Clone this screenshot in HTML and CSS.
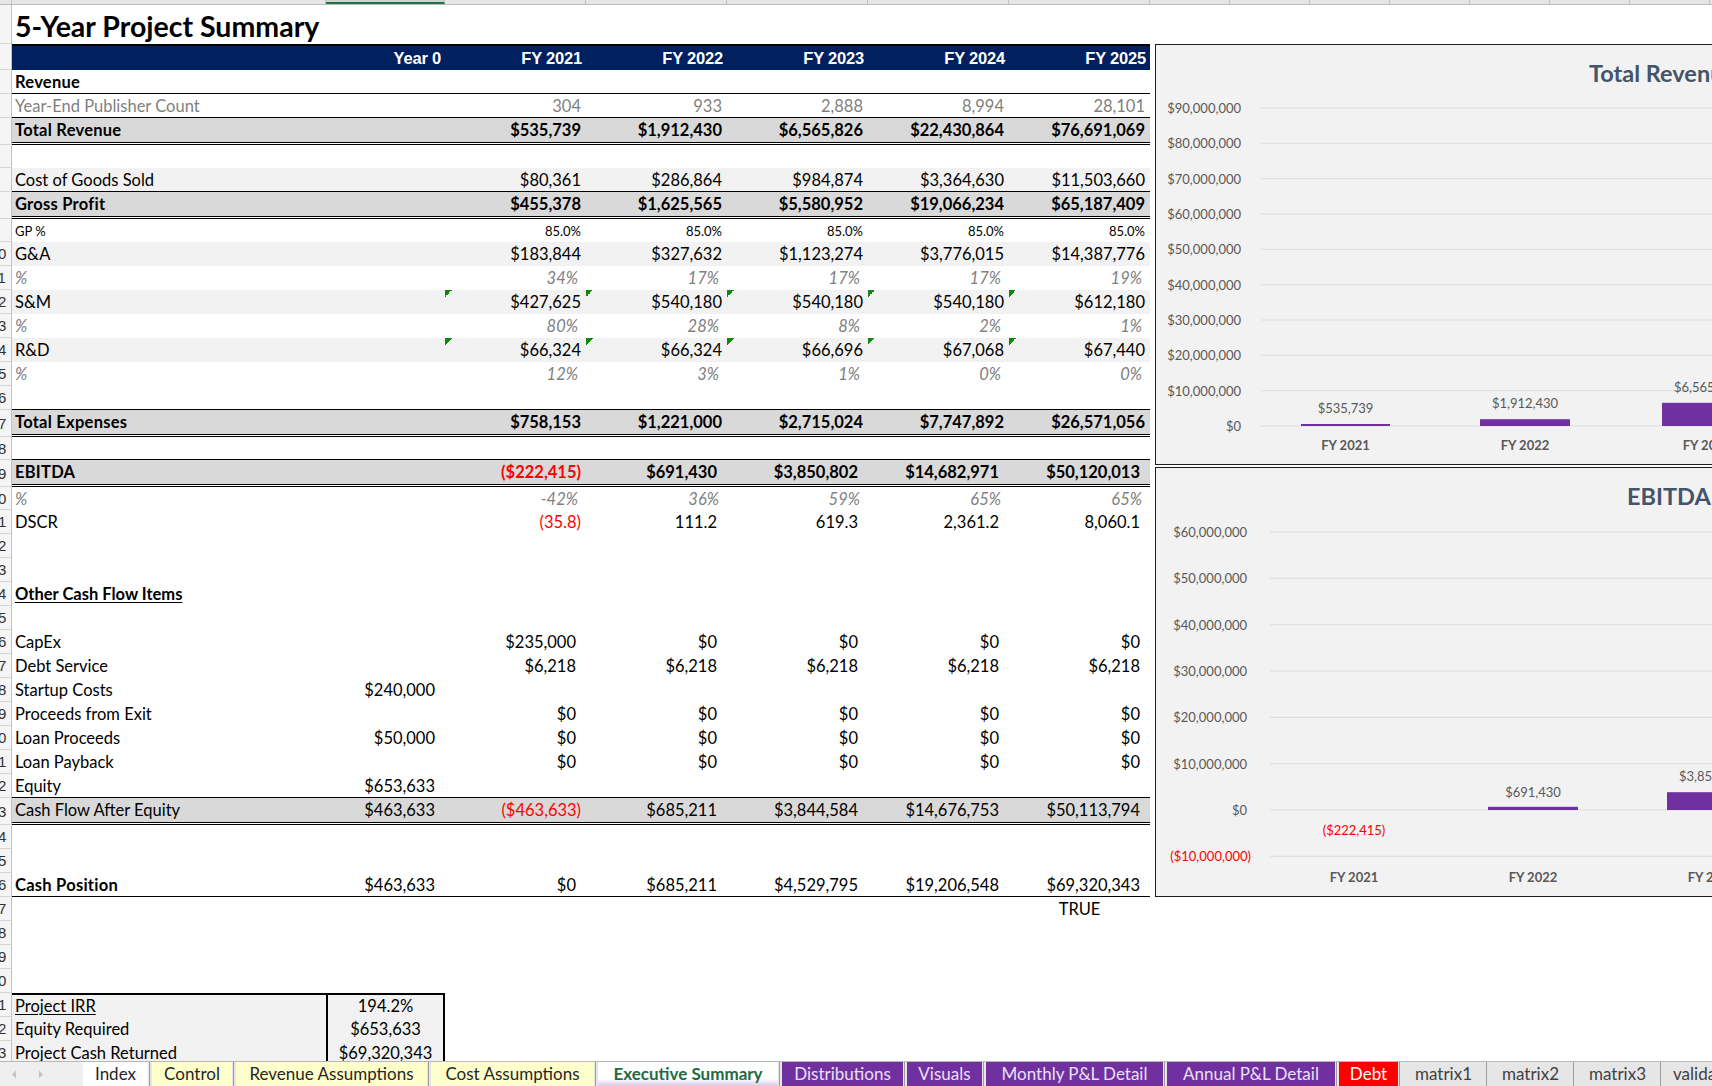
FILE: index.html
```html
<!DOCTYPE html>
<html>
<head>
<meta charset="utf-8">
<title>5-Year Project Summary</title>
<link rel="stylesheet" href="styles.css">
</head>
<body>
<div class="colheads">
  <div class="ch corner"></div>
  <div class="ch wa"></div>
  <div class="ch wb sel"></div>
  <div class="ch wc"></div><div class="ch wc"></div><div class="ch wc"></div><div class="ch wc"></div><div class="ch wc"></div>
  <div class="ch wh"></div><div class="ch wh"></div><div class="ch wh"></div><div class="ch wh"></div><div class="ch wh"></div><div class="ch wh"></div><div class="ch wh"></div>
</div>
<div class="sheet">
  <div class="rowheads">
    <div class="rh one h39"><span>1</span></div>
    <div class="rh one h26"><span>2</span></div>
    <div class="rh one"><span>3</span></div>
    <div class="rh one"><span>4</span></div>
    <div class="rh one h27"><span>5</span></div>
    <div class="rh one h23"><span>6</span></div>
    <div class="rh one"><span>7</span></div>
    <div class="rh one h27"><span>8</span></div>
    <div class="rh one h23"><span>9</span></div>
    <div class="rh"><span>10</span></div>
    <div class="rh"><span>11</span></div>
    <div class="rh"><span>12</span></div>
    <div class="rh"><span>13</span></div>
    <div class="rh"><span>14</span></div>
    <div class="rh"><span>15</span></div>
    <div class="rh"><span>16</span></div>
    <div class="rh h27"><span>17</span></div>
    <div class="rh h23"><span>18</span></div>
    <div class="rh h27"><span>19</span></div>
    <div class="rh h23"><span>20</span></div>
    <div class="rh"><span>21</span></div>
    <div class="rh"><span>22</span></div>
    <div class="rh"><span>23</span></div>
    <div class="rh"><span>24</span></div>
    <div class="rh"><span>25</span></div>
    <div class="rh"><span>26</span></div>
    <div class="rh"><span>27</span></div>
    <div class="rh"><span>28</span></div>
    <div class="rh"><span>29</span></div>
    <div class="rh"><span>30</span></div>
    <div class="rh"><span>31</span></div>
    <div class="rh"><span>32</span></div>
    <div class="rh h27"><span>33</span></div>
    <div class="rh"><span>34</span></div>
    <div class="rh"><span>35</span></div>
    <div class="rh"><span>36</span></div>
    <div class="rh"><span>37</span></div>
    <div class="rh"><span>38</span></div>
    <div class="rh"><span>39</span></div>
    <div class="rh"><span>40</span></div>
    <div class="rh"><span>41</span></div>
    <div class="rh"><span>42</span></div>
    <div class="rh"><span>43</span></div>
  </div>

  <div class="table">
    <div class="titlerow"><span class="title">5-Year Project Summary</span></div>
    <div class="row hdr"><div></div><div class="c">Year 0</div><div class="c">FY 2021</div><div class="c">FY 2022</div><div class="c">FY 2023</div><div class="c">FY 2024</div><div class="c">FY 2025</div></div>
    <div class="row bb"><div class="c l b">Revenue</div></div>
    <div class="row bb grey"><div class="c l">Year-End Publisher Count</div><div></div><div class="c">304</div><div class="c">933</div><div class="c">2,888</div><div class="c">8,994</div><div class="c">28,101</div></div>
    <div class="row tot b"><div class="c l">Total Revenue</div><div></div><div class="c">$535,739</div><div class="c">$1,912,430</div><div class="c">$6,565,826</div><div class="c">$22,430,864</div><div class="c">$76,691,069</div></div>
    <div class="row h23"></div>
    <div class="row lt bb"><div class="c l">Cost of Goods Sold</div><div></div><div class="c">$80,361</div><div class="c">$286,864</div><div class="c">$984,874</div><div class="c">$3,364,630</div><div class="c">$11,503,660</div></div>
    <div class="row tot b"><div class="c l">Gross Profit</div><div></div><div class="c">$455,378</div><div class="c">$1,625,565</div><div class="c">$5,580,952</div><div class="c">$19,066,234</div><div class="c">$65,187,409</div></div>
    <div class="row h23 small"><div class="c l">GP %</div><div></div><div class="c">85.0%</div><div class="c">85.0%</div><div class="c">85.0%</div><div class="c">85.0%</div><div class="c">85.0%</div></div>
    <div class="row lt"><div class="c l">G&amp;A</div><div></div><div class="c">$183,844</div><div class="c">$327,632</div><div class="c">$1,123,274</div><div class="c">$3,776,015</div><div class="c">$14,387,776</div></div>
    <div class="row pct"><div class="c l">%</div><div></div><div class="c">34%</div><div class="c">17%</div><div class="c">17%</div><div class="c">17%</div><div class="c">19%</div></div>
    <div class="row lt"><div class="c l">S&amp;M</div><div></div><div class="c tri">$427,625</div><div class="c tri">$540,180</div><div class="c tri">$540,180</div><div class="c tri">$540,180</div><div class="c tri">$612,180</div></div>
    <div class="row pct"><div class="c l">%</div><div></div><div class="c">80%</div><div class="c">28%</div><div class="c">8%</div><div class="c">2%</div><div class="c">1%</div></div>
    <div class="row lt"><div class="c l">R&amp;D</div><div></div><div class="c tri">$66,324</div><div class="c tri">$66,324</div><div class="c tri">$66,696</div><div class="c tri">$67,068</div><div class="c tri">$67,440</div></div>
    <div class="row pct"><div class="c l">%</div><div></div><div class="c">12%</div><div class="c">3%</div><div class="c">1%</div><div class="c">0%</div><div class="c">0%</div></div>
    <div class="row bb"></div>
    <div class="row tot b"><div class="c l">Total Expenses</div><div></div><div class="c">$758,153</div><div class="c">$1,221,000</div><div class="c">$2,715,024</div><div class="c">$7,747,892</div><div class="c">$26,571,056</div></div>
    <div class="row h23 bb"></div>
    <div class="row tot b"><div class="c l">EBITDA</div><div></div><div class="c neg">($222,415)</div><div class="c p">$691,430</div><div class="c p">$3,850,802</div><div class="c p">$14,682,971</div><div class="c p">$50,120,013</div></div>
    <div class="row h23 pct"><div class="c l">%</div><div></div><div class="c">-42%</div><div class="c">36%</div><div class="c">59%</div><div class="c">65%</div><div class="c">65%</div></div>
    <div class="row"><div class="c l">DSCR</div><div></div><div class="c neg">(35.8)</div><div class="c p">111.2</div><div class="c p">619.3</div><div class="c p">2,361.2</div><div class="c p">8,060.1</div></div>
    <div class="row"></div>
    <div class="row"></div>
    <div class="row"><div class="c l b u">Other Cash Flow Items</div></div>
    <div class="row"></div>
    <div class="row"><div class="c l">CapEx</div><div></div><div class="c p">$235,000</div><div class="c p">$0</div><div class="c p">$0</div><div class="c p">$0</div><div class="c p">$0</div></div>
    <div class="row"><div class="c l">Debt Service</div><div></div><div class="c p">$6,218</div><div class="c p">$6,218</div><div class="c p">$6,218</div><div class="c p">$6,218</div><div class="c p">$6,218</div></div>
    <div class="row"><div class="c l">Startup Costs</div><div class="c p">$240,000</div></div>
    <div class="row"><div class="c l">Proceeds from Exit</div><div></div><div class="c p">$0</div><div class="c p">$0</div><div class="c p">$0</div><div class="c p">$0</div><div class="c p">$0</div></div>
    <div class="row"><div class="c l">Loan Proceeds</div><div class="c p">$50,000</div><div class="c p">$0</div><div class="c p">$0</div><div class="c p">$0</div><div class="c p">$0</div><div class="c p">$0</div></div>
    <div class="row"><div class="c l">Loan Payback</div><div></div><div class="c p">$0</div><div class="c p">$0</div><div class="c p">$0</div><div class="c p">$0</div><div class="c p">$0</div></div>
    <div class="row bb"><div class="c l">Equity</div><div class="c p">$653,633</div></div>
    <div class="row tot"><div class="c l">Cash Flow After Equity</div><div class="c p">$463,633</div><div class="c neg">($463,633)</div><div class="c p">$685,211</div><div class="c p">$3,844,584</div><div class="c p">$14,676,753</div><div class="c p">$50,113,794</div></div>
    <div class="row"></div>
    <div class="row"></div>
    <div class="row bb"><div class="c l b">Cash Position</div><div class="c p">$463,633</div><div class="c p">$0</div><div class="c p">$685,211</div><div class="c p">$4,529,795</div><div class="c p">$19,206,548</div><div class="c p">$69,320,343</div></div>
    <div class="row"><div></div><div></div><div></div><div></div><div></div><div></div><div class="c ctr">TRUE</div></div>
    <div class="row"></div>
    <div class="row"></div>
    <div class="row"></div>
    <div class="row box top"><div class="c l"><span class="u">Project IRR</span></div><div class="c val">194.2%</div></div>
    <div class="row box"><div class="c l">Equity Required</div><div class="c val">$653,633</div></div>
    <div class="row box"><div class="c l">Project Cash Returned</div><div class="c val">$69,320,343</div></div>
  </div>

  <div class="charts">
    <div class="chart c1">
      <svg width="620" height="419" viewBox="0 0 620 419">
        <text class="ctitle" x="433" y="28">Total Revenue</text>
        <g class="grid">
          <line x1="105" y1="63" x2="620" y2="63"/>
          <line x1="105" y1="98.3" x2="620" y2="98.3"/>
          <line x1="105" y1="133.7" x2="620" y2="133.7"/>
          <line x1="105" y1="169" x2="620" y2="169"/>
          <line x1="105" y1="204.3" x2="620" y2="204.3"/>
          <line x1="105" y1="239.7" x2="620" y2="239.7"/>
          <line x1="105" y1="275" x2="620" y2="275"/>
          <line x1="105" y1="310.3" x2="620" y2="310.3"/>
          <line x1="105" y1="345.7" x2="620" y2="345.7"/>
          <line x1="105" y1="381" x2="620" y2="381"/>
        </g>
        <g class="ylab">
          <text x="85" y="63">$90,000,000</text>
          <text x="85" y="98.3">$80,000,000</text>
          <text x="85" y="133.7">$70,000,000</text>
          <text x="85" y="169">$60,000,000</text>
          <text x="85" y="204.3">$50,000,000</text>
          <text x="85" y="239.7">$40,000,000</text>
          <text x="85" y="275">$30,000,000</text>
          <text x="85" y="310.3">$20,000,000</text>
          <text x="85" y="345.7">$10,000,000</text>
          <text x="85" y="381">$0</text>
        </g>
        <g class="bar">
          <rect x="145" y="379" width="89" height="2"/>
          <rect x="324" y="374.2" width="90" height="6.8"/>
          <rect x="506" y="357.8" width="90" height="23.2"/>
        </g>
        <g class="dlab">
          <text x="189.5" y="363">$535,739</text>
          <text x="369" y="358">$1,912,430</text>
          <text x="551" y="342">$6,565,826</text>
        </g>
        <g class="xlab">
          <text x="189.5" y="400">FY 2021</text>
          <text x="369" y="400">FY 2022</text>
          <text x="551" y="400">FY 2023</text>
        </g>
      </svg>
    </div>
    <div class="chart c2">
      <svg width="620" height="428" viewBox="0 0 620 428">
        <text class="ctitle" x="471" y="28">EBITDA</text>
        <g class="grid">
          <line x1="114" y1="64" x2="620" y2="64"/>
          <line x1="114" y1="110.3" x2="620" y2="110.3"/>
          <line x1="114" y1="156.7" x2="620" y2="156.7"/>
          <line x1="114" y1="203" x2="620" y2="203"/>
          <line x1="114" y1="249.3" x2="620" y2="249.3"/>
          <line x1="114" y1="295.7" x2="620" y2="295.7"/>
          <line x1="114" y1="342" x2="620" y2="342"/>
          <line x1="114" y1="388.3" x2="620" y2="388.3"/>
        </g>
        <g class="ylab">
          <text x="91" y="64">$60,000,000</text>
          <text x="91" y="110.3">$50,000,000</text>
          <text x="91" y="156.7">$40,000,000</text>
          <text x="91" y="203">$30,000,000</text>
          <text x="91" y="249.3">$20,000,000</text>
          <text x="91" y="295.7">$10,000,000</text>
          <text x="91" y="342">$0</text>
          <text class="red" x="95" y="388.3">($10,000,000)</text>
        </g>
        <g class="bar">
          <rect x="332" y="338.8" width="90" height="3.2"/>
          <rect x="511" y="324.2" width="90" height="17.8"/>
        </g>
        <g class="dlab">
          <text class="red" x="198" y="362">($222,415)</text>
          <text x="377" y="324">$691,430</text>
          <text x="556" y="308">$3,850,802</text>
        </g>
        <g class="xlab">
          <text x="198" y="409">FY 2021</text>
          <text x="377" y="409">FY 2022</text>
          <text x="556" y="409">FY 2023</text>
        </g>
      </svg>
    </div>
  </div>
</div>

<div class="tabs">
  <div class="nav">
    <svg width="60" height="25" viewBox="0 0 60 25"><polygon points="12,12.5 16,8.5 16,16.5" fill="#c4c4c4"/><polygon points="39,8.5 43,12.5 39,16.5" fill="#c4c4c4"/></svg>
  </div>
  <div class="tab t-index">Index</div><div class="sep"></div>
  <div class="tab yel t-control">Control</div><div class="sep"></div>
  <div class="tab yel t-rev">Revenue Assumptions</div><div class="sep"></div>
  <div class="tab yel t-cost">Cost Assumptions</div><div class="sep"></div>
  <div class="tab active t-exec">Executive Summary</div><div class="sep"></div>
  <div class="tab pur t-dist">Distributions</div><div class="sep"></div>
  <div class="tab pur t-vis">Visuals</div><div class="sep"></div>
  <div class="tab pur t-mon">Monthly P&amp;L Detail</div><div class="sep"></div>
  <div class="tab pur t-ann">Annual P&amp;L Detail</div><div class="sep"></div>
  <div class="tab red t-debt">Debt</div><div class="sep"></div>
  <div class="tab gry t-m">matrix1</div><div class="sep"></div>
  <div class="tab gry t-m">matrix2</div><div class="sep"></div>
  <div class="tab gry t-m">matrix3</div><div class="sep"></div>
  <div class="tab gry t-valid">validation</div>
</div>
</body>
</html>
```
FILE: styles.css
```css
* { box-sizing: border-box; }
html, body { margin: 0; padding: 0; }
body {
  width: 1712px;
  height: 1086px;
  overflow: hidden;
  background: #ffffff;
  font-family: Lato, "Noto Sans", sans-serif;
  color: #000;
}

/* column header strip */
.colheads {
  display: flex;
  height: 5px;
  background: #e6e6e6;
  border-bottom: 1px solid #bdbdbd;
  overflow: hidden;
}
.ch { flex: none; height: 100%; border-right: 1px solid #c3c3c3; }
.corner { width: 12px; }
.wa { width: 314px; }
.wb { width: 119px; }
.wc { width: 141px; }
.wh { width: 80px; }
.sel { background: #d3d3d3; border-bottom: 2px solid #217346; }

/* sheet */
.sheet {
  display: flex;
  height: 1056px;
  overflow: hidden;
}
.rowheads {
  flex: none;
  width: 12px;
  background: #f5f5f5;
  border-right: 1px solid #c3c3c3;
  overflow: hidden;
}
.rh {
  height: 24px;
  border-bottom: 1px solid #d6d6d6;
  overflow: hidden;
  display: flex;
  align-items: center;
  font-family: "Liberation Sans", Arial, sans-serif;
  font-size: 15px;
  color: #333;
}
.rh span { display: block; flex: none; width: 36px; margin-left: -20px; text-align: center; }
.rh.one span { margin-left: -32px; }
.rh.h39 { height: 39px; }
.rh.h26 { height: 26px; }
.rh.h27 { height: 27px; }
.rh.h23 { height: 23px; }

.table { flex: none; width: 1138px; }
.titlerow {
  height: 39px;
  display: flex;
  align-items: flex-end;
  padding: 0 0 1px 3px;
}
.title { font-weight: 700; font-size: 28.5px; line-height: 34px; }

.row {
  display: grid;
  grid-template-columns: 314px 119px repeat(5, 141px);
  height: 24px;
  align-items: center;
  font-size: 16.5px;
}
.row.h23 { height: 23px; }
.c { padding: 0 5px 0 3px; white-space: nowrap; text-align: right; line-height: 24px; }
.c.l { text-align: left; }
.b .c.l, .c.l.b { letter-spacing: 0.25px; }
.c.p { padding-right: 10px; }
.c.neg { color: #ff0000; }
.c.ctr { text-align: center; padding: 0; }
.b { font-weight: 700; }
.u { text-decoration: underline; text-underline-offset: 2px; }
.c.l.b.u { letter-spacing: 0; }
.bb { border-bottom: 1px solid #000; }
.grey { color: #7f7f7f; }
.lt { background: #f2f2f2; }
.lt.bb { border-bottom: 1px solid #000; }
.tot {
  height: 27px;
  background: #d9d9d9;
  background-clip: padding-box;
  border-bottom: 3px double #000;
}
.pct { color: #808080; font-style: italic; }
.pct .c { padding-right: 8px; }
.pct .c.l { padding-right: 0; }
.small { font-size: 13px; }
.tri {
  background-image: linear-gradient(135deg, #0c8a0c 50%, transparent 50%);
  background-size: 7px 7px;
  background-repeat: no-repeat;
}

.hdr {
  height: 26px;
  background: #002060;
  border-top: 2px solid #000;
  color: #fff;
  font-family: "Liberation Sans", Arial, sans-serif;
  font-weight: 700;
  font-size: 16.5px;
  letter-spacing: -0.2px;
}
.hdr .c { padding-right: 4px; line-height: 24px; }

/* summary box */
.box .c.l { background: #f2f2f2; height: 24px; }
.box .c.val {
  background: #f2f2f2;
  height: 24px;
  text-align: center;
  padding: 0;
  border-left: 2px solid #000;
  border-right: 2px solid #000;
}
.box.top .c { border-top: 2px solid #000; line-height: 22px; }

/* charts */
.charts {
  flex: none;
  width: 620px;
  margin-left: 5px;
  padding-top: 39px;
}
.chart {
  background: #f2f2f2;
  border: 1px solid #1f1f1f;
  border-right: none;
  width: 620px;
}
.chart svg { display: block; }
.c1 { height: 421px; }
.c2 { height: 430px; margin-top: 2px; }
.chart text { font-family: Lato, "Noto Sans", sans-serif; dominant-baseline: central; }
.ctitle { font-size: 23.5px; font-weight: 700; fill: #44546a; }
.grid line { stroke: #d9dde3; stroke-width: 1; }
.ylab text { font-size: 13px; fill: #595959; text-anchor: end; }
.dlab text { font-size: 13px; fill: #595959; text-anchor: middle; }
.xlab text { font-size: 13px; font-weight: 700; fill: #595959; text-anchor: middle; }
.chart text.red { fill: #ff0000; }
.bar rect { fill: #7030a0; }

/* sheet tabs */
.tabs {
  display: flex;
  height: 25px;
  background: #e6e6e6;
  border-top: 1px solid #b8b8b8;
  font-size: 17px;
  overflow: hidden;
}
.nav { flex: none; width: 83px; background: #efefef; }
.nav svg { display: block; }
.tab {
  flex: none;
  height: 24px;
  display: flex;
  align-items: center;
  justify-content: center;
  padding-bottom: 2px;
  white-space: nowrap;
  color: #262626;
  background: #ffffff;
}
.sep {
  flex: none;
  width: 4px;
  background: linear-gradient(to right, transparent 1px, #9c9c9c 1px, #9c9c9c 2px, transparent 2px);
}
.yel { background: #ffffcc; }
.pur { background: #7030a0; color: #e9e0f5; }
.red { background: #ff0000; color: #ffffff; }
.gry { background: #e6e6e6; color: #404040; }
.active {
  background: linear-gradient(to bottom, #ffffff 0, #ffffff 70%, #d9c9ea 100%);
  color: #1e6b3f;
  font-weight: 700;
}
.t-index { width: 65px; }
.t-control { width: 80px; }
.t-rev { width: 191px; }
.t-cost { width: 163px; }
.t-exec { width: 180px; }
.t-dist { width: 121px; }
.t-vis { width: 75px; }
.t-mon { width: 177px; }
.t-ann { width: 168px; }
.t-debt { width: 59px; }
.t-m { width: 83px; }
.t-valid { width: 90px; justify-content: flex-start; padding-left: 10px; }
```
